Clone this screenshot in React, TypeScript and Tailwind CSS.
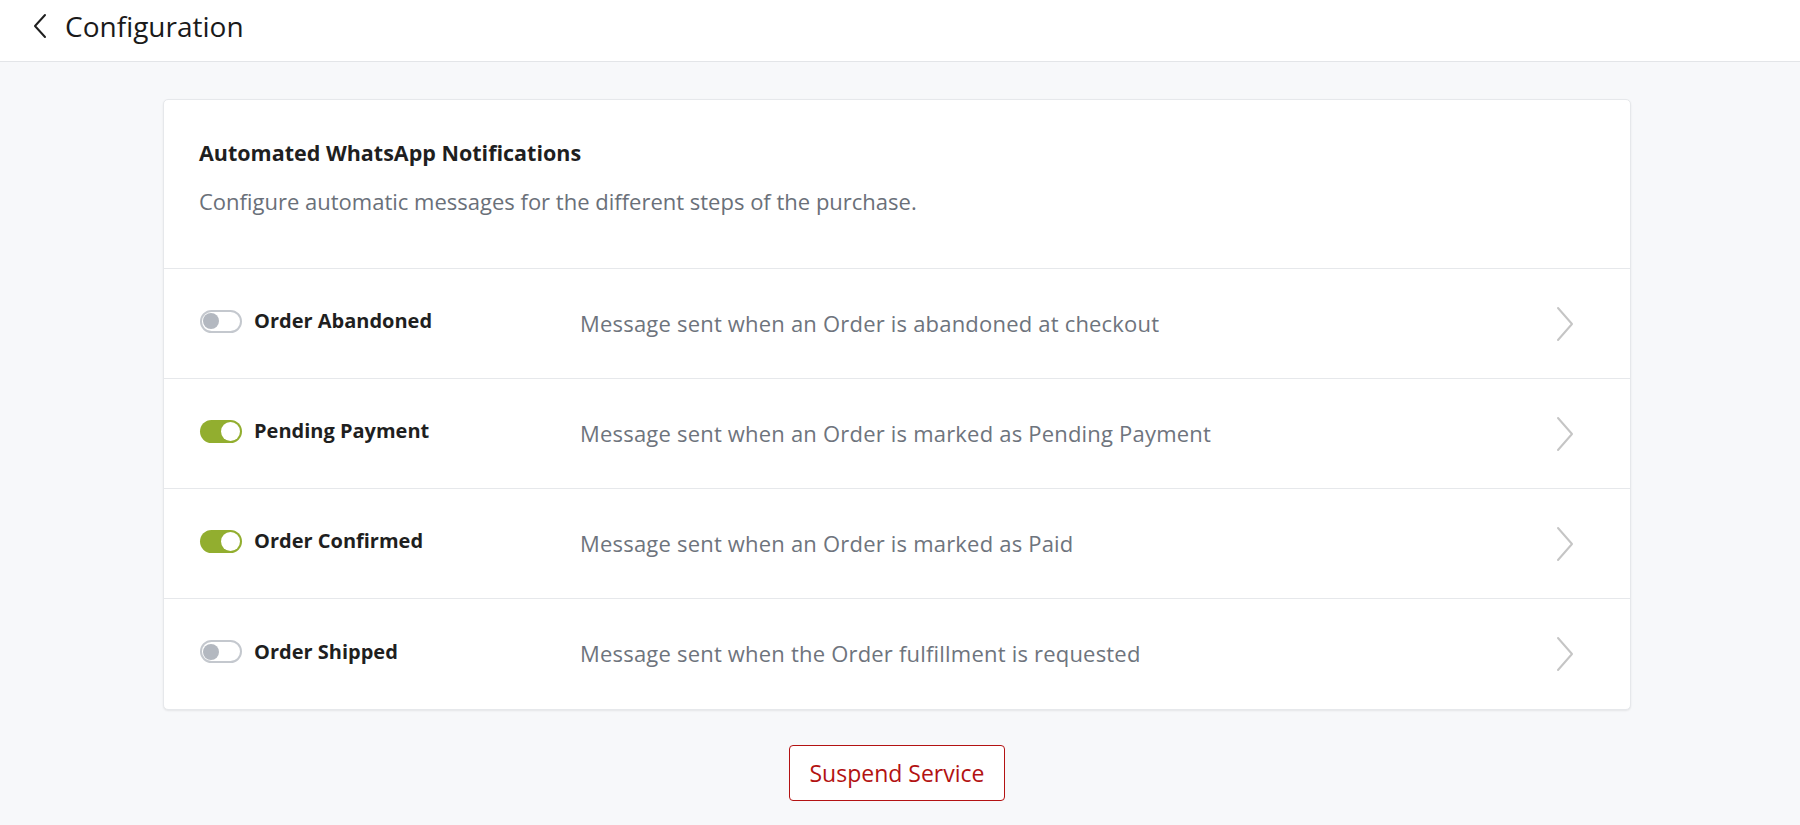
import React from 'react';

const notifications = [
  { id: 1, title: 'Order Abandoned', description: 'Message sent when an Order is abandoned at checkout', enabled: false },
  { id: 2, title: 'Pending Payment', description: 'Message sent when an Order is marked as Pending Payment', enabled: true },
  { id: 3, title: 'Order Confirmed', description: 'Message sent when an Order is marked as Paid', enabled: true },
  { id: 4, title: 'Order Shipped', description: 'Message sent when the Order fulfillment is requested', enabled: false },
];

const Toggle: React.FC<{ on: boolean }> = ({ on }) =>
  on ? (
    <div className="w-[42px] h-[23px] rounded-full bg-[#92ae2f] flex items-center justify-end pr-[2px] shrink-0">
      <div className="w-[19px] h-[19px] rounded-full bg-white" />
    </div>
  ) : (
    <div className="w-[42px] h-[23px] rounded-full bg-white border-2 border-[#c4c8ce] flex items-center pl-[1px] shrink-0">
      <div className="w-[16px] h-[16px] rounded-full bg-[#b3b8c0]" />
    </div>
  );

const App: React.FC = () => {
  return (
    <div className="min-h-screen bg-[#f7f8fa] font-['Open_Sans',_sans-serif]">
      {/* Header */}
      <header className="h-[62px] bg-white border-b border-[#e3e5e8] flex items-center pl-[32px] pb-[9px]">
        <svg width="16" height="26" viewBox="0 0 16 26" fill="none" className="mr-[17px]">
          <path d="M13 2 L3 13 L13 24" stroke="#1f1f1f" strokeWidth="2" strokeLinecap="round" strokeLinejoin="round" />
        </svg>
        <h1 className="text-[28px] text-[#1a1a1a] leading-none">Configuration</h1>
      </header>

      <div className="pl-[163px] pr-[169px] pt-[37px] pb-6">
        {/* Card */}
        <div className="bg-white rounded-[5px] border border-[#e6e8eb] shadow-[0_1px_2px_rgba(0,0,0,0.08)]">
          <div className="px-[35px] pt-[40px] pb-[54px] border-b border-[#e6e8eb]">
            <h2 className="text-[21.5px] font-bold text-[#1f1f1f] leading-[25px]">Automated WhatsApp Notifications</h2>
            <p className="text-[22px] text-[#6a7079] mt-[24px] leading-[25px]">
              Configure automatic messages for the different steps of the purchase.
            </p>
          </div>

          {notifications.map((n, i) => (
            <div
              key={n.id}
              className={`h-[110px] flex items-center pl-[36px] pr-[56px] ${i < notifications.length - 1 ? 'border-b border-[#e6e8eb]' : ''}`}
            >
              <div className="w-[380px] flex items-center gap-[12px] -mt-[5px]">
                <Toggle on={n.enabled} />
                <span className="text-[20px] font-bold text-[#1f1f1f]">{n.title}</span>
              </div>
              <span className="flex-1 text-[22px] text-[#6e747d] tracking-[0.2px] -mt-[1px]">{n.description}</span>
              <svg width="18" height="36" viewBox="0 0 18 36" fill="none">
                <path d="M2 2 L16 18 L2 34" stroke="#c5c5c5" strokeWidth="2" strokeLinecap="round" strokeLinejoin="round" />
              </svg>
            </div>
          ))}
        </div>

        {/* Suspend */}
        <div className="flex justify-center mt-[35px]">
          <button className="w-[216px] h-[56px] border border-[#b31212] rounded-[4px] text-[#b31212] text-[23px] bg-white">
            Suspend Service
          </button>
        </div>
      </div>
    </div>
  );
};

export default App;
